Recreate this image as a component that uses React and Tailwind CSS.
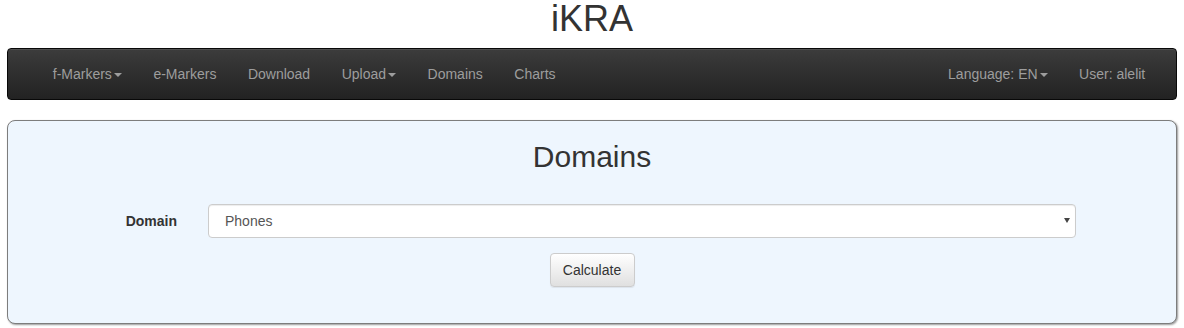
import { useState } from 'react';

function Caret() {
  return (
    <span className="ml-[2px] inline-block h-0 w-0 border-t-[4px] border-r-[4px] border-l-[4px] border-t-current border-r-transparent border-l-transparent align-middle" />
  );
}

function NavLink({ children, dropdown }) {
  return (
    <a href="#" className="block px-[15.75px] py-[15px] leading-[20px] text-[#9d9d9d] hover:text-white">
      {children}
      {dropdown && <Caret />}
    </a>
  );
}

export default function App() {
  const [domain, setDomain] = useState('Phones');

  return (
    <div className="min-h-screen bg-white pt-px text-[14px] text-[#333] font-['Liberation_Sans',Arial,sans-serif]">
      {/* Page title */}
      <h1 className="-mt-[2px] mb-[9px] text-center text-[36px] leading-[40px] font-normal text-[#333]">iKRA</h1>

      {/* Top navbar */}
      <nav className="mx-[7px] flex h-[52px] items-center justify-between rounded-[4px] border border-[#080808] bg-gradient-to-b from-[#3c3c3c] to-[#222] pl-[29px] pr-[15px] shadow-[inset_0_1px_0_rgba(255,255,255,0.1)]">
        <div className="flex">
          <NavLink dropdown>f-Markers</NavLink>
          <NavLink>e-Markers</NavLink>
          <NavLink>Download</NavLink>
          <NavLink dropdown>Upload</NavLink>
          <NavLink>Domains</NavLink>
          <NavLink>Charts</NavLink>
        </div>
        <div className="flex">
          <NavLink dropdown>Language: EN</NavLink>
          <NavLink>User: alelit</NavLink>
        </div>
      </nav>

      {/* Domains panel */}
      <div className="mx-[7px] mt-[20px] h-[204px] rounded-[8px] border border-[#7d7d7d] bg-[#eef6fe] pt-[19px] shadow-[1px_1px_2px_rgba(0,0,0,0.4)]">
        <h2 className="text-center text-[30px] leading-[33px] font-normal text-[#333]">Domains</h2>

        <form className="mt-[31px] flex flex-col items-center" onSubmit={(e) => e.preventDefault()}>
          <div className="flex w-full items-center">
            <label className="w-[169px] text-right font-bold leading-[20px] text-[#333]">Domain</label>
            <div className="relative ml-[31px] w-[868px]">
              <select
                value={domain}
                onChange={(e) => setDomain(e.target.value)}
                className="block h-[34px] w-full appearance-none rounded-[4px] border border-[#ccc] bg-white pl-[16px] pr-[24px] text-[14px] text-[#555] shadow-[inset_0_1px_1px_rgba(0,0,0,0.075)] outline-none"
              >
                <option>Phones</option>
                <option>Laptops</option>
                <option>Tablets</option>
              </select>
              <span className="pointer-events-none absolute top-[14px] right-[6px] h-0 w-0 border-t-[5px] border-r-[3.5px] border-l-[3.5px] border-t-[#444] border-r-transparent border-l-transparent" />
            </div>
          </div>

          <button
            type="submit"
            className="mt-[15px] h-[34px] w-[85px] rounded-[4px] border border-[#ccc] bg-gradient-to-b from-white to-[#e0e0e0] text-[14px] text-[#333] shadow-[inset_0_1px_0_rgba(255,255,255,0.15),0_1px_1px_rgba(0,0,0,0.075)]"
          >
            Calculate
          </button>
        </form>
      </div>
    </div>
  );
}
